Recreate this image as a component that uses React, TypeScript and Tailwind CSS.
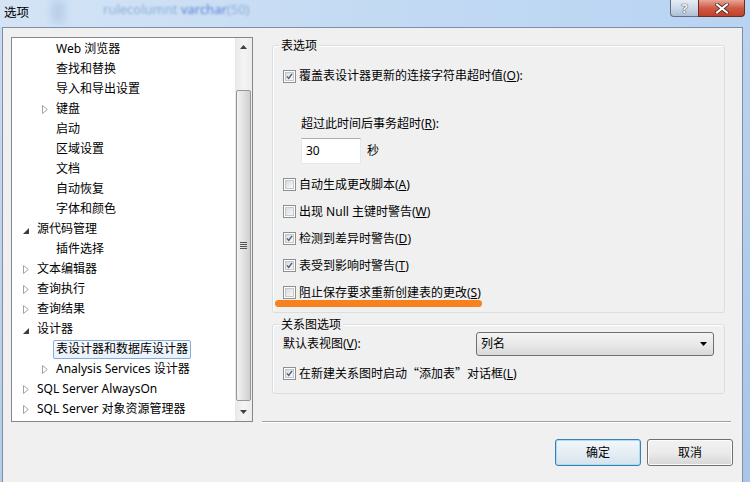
import React from 'react';

type TreeItem = {
    label: string;
    level: 1 | 2;
    arrow?: 'collapsed' | 'expanded';
    selected?: boolean;
};

const treeItems: TreeItem[] = [
    { label: 'Web 浏览器', level: 2 },
    { label: '查找和替换', level: 2 },
    { label: '导入和导出设置', level: 2 },
    { label: '键盘', level: 2, arrow: 'collapsed' },
    { label: '启动', level: 2 },
    { label: '区域设置', level: 2 },
    { label: '文档', level: 2 },
    { label: '自动恢复', level: 2 },
    { label: '字体和颜色', level: 2 },
    { label: '源代码管理', level: 1, arrow: 'expanded' },
    { label: '插件选择', level: 2 },
    { label: '文本编辑器', level: 1, arrow: 'collapsed' },
    { label: '查询执行', level: 1, arrow: 'collapsed' },
    { label: '查询结果', level: 1, arrow: 'collapsed' },
    { label: '设计器', level: 1, arrow: 'expanded' },
    { label: '表设计器和数据库设计器', level: 2, selected: true },
    { label: 'Analysis Services 设计器', level: 2, arrow: 'collapsed' },
    { label: 'SQL Server AlwaysOn', level: 1, arrow: 'collapsed' },
    { label: 'SQL Server 对象资源管理器', level: 1, arrow: 'collapsed' },
];

const TreeArrow = ({ kind }: { kind?: 'collapsed' | 'expanded' }) => {
    if (kind === 'collapsed') {
        return (
            <svg width="6" height="9" viewBox="0 0 6 9">
                <path d="M0.5 0.5 L5.3 4.5 L0.5 8.5 Z" fill="none" stroke="#a3a3a3" strokeWidth="1" />
            </svg>
        );
    }
    if (kind === 'expanded') {
        return (
            <svg width="6" height="6" viewBox="0 0 6 6" className="mt-[3px]">
                <path d="M6 0 L6 6 L0 6 Z" fill="#3c3c3c" />
            </svg>
        );
    }
    return null;
};

const CheckBox = ({ checked }: { checked?: boolean }) => (
    <span className="w-[13px] h-[13px] border border-[#8e8f8f] bg-white p-[1px] flex shrink-0">
        <span className="w-full h-full border border-[#c4c7cb] bg-gradient-to-br from-[#d9dbde] to-[#f8f8f8] flex items-center justify-center">
            {checked && (
                <svg width="9" height="9" viewBox="0 0 9 9">
                    <path d="M1.2 4.3 L3.5 6.9 L7.8 1.2" fill="none" stroke="#4a5a7c" strokeWidth="1.7" />
                </svg>
            )}
        </span>
    </span>
);

const CheckRow = ({ checked, children, className = '' }: { checked?: boolean; children: React.ReactNode; className?: string }) => (
    <div className={`flex items-center gap-[3px] pl-[10px] ${className}`}>
        <CheckBox checked={checked} />
        <span className="leading-[16px]">{children}</span>
    </div>
);

const GroupBox = ({ title, children, className = '' }: { title: string; children: React.ReactNode; className?: string }) => (
    <div className={`border border-[#d5dfe5] rounded-[3px] shadow-[inset_1px_1px_0_#ffffff] ${className}`}>
        <div className="-mt-[8px] ml-[6px] px-[2px] w-fit bg-[#f0f0f0] leading-[16px]">{title}</div>
        {children}
    </div>
);

const App: React.FC = () => {
    return (
        <div className="w-[750px] h-[482px] overflow-hidden flex flex-col bg-[#b9d1ea] text-[12px] text-black font-['Noto_Sans','Noto_Sans_CJK_SC',sans-serif]">
            {/* Title bar */}
            <div className="h-[27px] shrink-0 flex items-start bg-gradient-to-r from-[#d4e4f5] via-[#c3daf3] to-[#b8d4f3]">
                <span className="pl-[4px] pt-[5px] leading-[16px] text-[12.5px]">选项</span>
                <span className="ml-[22px] mt-[1px] w-[14px] h-[22px] bg-[#a9c3e2] blur-[4px] opacity-60" />
                <span className="ml-[38px] pt-[2px] leading-[14px] text-[13px] blur-[1.3px] text-[#8fb0d8]">
                    rulecolumnt <span className="text-[#5f84d4]">varchar</span>(50)
                </span>
                <div className="ml-auto mr-[5px] flex">
                    <div className="w-[28px] h-[17px] border border-r-0 border-t-0 border-[#5f6f86] rounded-bl-[4px] bg-gradient-to-b from-[#e5edf6] via-[#cdd9e7] to-[#aebfd4] flex items-center justify-center">
                        <span className="text-[13px] leading-[14px] font-bold text-[#f4f6f9] [text-shadow:0_0_1px_#2f3a4a,0_0_1px_#2f3a4a]">?</span>
                    </div>
                    <div className="w-[47px] h-[17px] border border-t-0 border-[#6b2d24] rounded-br-[4px] bg-gradient-to-b from-[#e6a597] via-[#cf5a44] to-[#c0412b] flex items-center justify-center">
                        <svg width="14" height="11" viewBox="0 0 14 11">
                            <path d="M2 1.5 L12 9.5 M12 1.5 L2 9.5" stroke="#4a2a26" strokeWidth="3.6" strokeLinecap="square" />
                            <path d="M2 1.5 L12 9.5 M12 1.5 L2 9.5" stroke="#ffffff" strokeWidth="2" strokeLinecap="square" />
                        </svg>
                    </div>
                </div>
            </div>

            <div className="flex-1 flex">
                <div className="w-[2px] bg-gradient-to-b from-[#c7dbf1] to-[#b6cde8]" />

                {/* Client area */}
                <div className="w-[741px] bg-[#f0f0f0] border-l border-t border-r border-[#7f8ea3] flex items-start">
                    {/* Left tree */}
                    <div className="pl-[8px] pt-[9px]">
                        <div className="w-[242px] h-[385px] border border-[#828790] bg-white flex">
                            <div className="flex-1 flex flex-col pt-[1px]">
                                {treeItems.map((item) => (
                                    <div
                                        key={item.label}
                                        className={`h-[20px] flex items-center ${item.level === 1 ? 'pl-[11px]' : 'pl-[30px]'}`}
                                    >
                                        <span className="w-[14px] h-[20px] flex items-center">
                                            <TreeArrow kind={item.arrow} />
                                        </span>
                                        {item.selected ? (
                                            <span className="-ml-[3px] h-[19px] px-[2px] flex items-center border border-[#84acdd] rounded-[2px] bg-gradient-to-b from-[#f8fbfe] to-[#e8f1fc]">
                                                {item.label}
                                            </span>
                                        ) : (
                                            <span className="leading-[16px]">{item.label}</span>
                                        )}
                                    </div>
                                ))}
                            </div>

                            {/* Scrollbar */}
                            <div className="w-[17px] flex flex-col bg-gradient-to-r from-[#e8e8e8] via-[#f4f4f4] to-[#ededed]">
                                <div className="h-[17px] flex items-center justify-center">
                                    <svg width="7" height="4" viewBox="0 0 7 4">
                                        <path d="M0 4 L3.5 0 L7 4 Z" fill="#404040" />
                                    </svg>
                                </div>
                                <div className="h-[35px]" />
                                <div className="h-[311px] mx-[1px] border border-[#979797] rounded-[2px] bg-gradient-to-r from-[#f2f2f2] via-[#e2e2e2] to-[#cfcfcf] flex flex-col items-center justify-center gap-[1px]">
                                    <span className="w-[7px] h-[1px] bg-[#555555]" />
                                    <span className="w-[7px] h-[1px] bg-[#555555]" />
                                    <span className="w-[7px] h-[1px] bg-[#555555]" />
                                    <span className="w-[7px] h-[1px] bg-[#555555]" />
                                </div>
                                <div className="h-[2px]" />
                                <div className="h-[17px] flex items-center justify-center">
                                    <svg width="7" height="4" viewBox="0 0 7 4">
                                        <path d="M0 0 L7 0 L3.5 4 Z" fill="#404040" />
                                    </svg>
                                </div>
                            </div>
                        </div>
                    </div>

                    {/* Right panel */}
                    <div className="flex flex-col">
                        <div className="relative ml-[19px] mt-[17px] w-[453px]">
                            <GroupBox title="表选项" className="pb-[6px]">
                                <CheckRow checked className="mt-[14px]">
                                    覆盖表设计器更新的连接字符串超时值(<u>O</u>):
                                </CheckRow>
                                <div className="mt-[32px] pl-[28px] leading-[16px]">
                                    超过此时间后事务超时(<u>R</u>):
                                </div>
                                <div className="mt-[6px] pl-[28px] flex items-center gap-[6px]">
                                    <div className="w-[60px] h-[26px] bg-white border border-[#e3e9ef] border-t-[#abadb3] flex items-center pl-[4px]">
                                        30
                                    </div>
                                    <span>秒</span>
                                </div>
                                <div className="mt-[7px] flex flex-col">
                                    <CheckRow className="h-[27px]">
                                        自动生成更改脚本(<u>A</u>)
                                    </CheckRow>
                                    <CheckRow className="h-[27px]">
                                        出现 Null 主键时警告(<u>W</u>)
                                    </CheckRow>
                                    <CheckRow checked className="h-[27px]">
                                        检测到差异时警告(<u>D</u>)
                                    </CheckRow>
                                    <CheckRow checked className="h-[27px]">
                                        表受到影响时警告(<u>T</u>)
                                    </CheckRow>
                                    <CheckRow className="h-[27px]">
                                        阻止保存要求重新创建表的更改(<u>S</u>)
                                    </CheckRow>
                                </div>
                            </GroupBox>

                            {/* orange annotation stroke */}
                            <div className="absolute left-[3px] top-[255px] w-[207px] h-[7px] rounded-full bg-[#f5821f]" />

                            <GroupBox title="关系图选项" className="mt-[11px] pb-[11px]">
                                <div className="-mt-[1px] h-[24px] pl-[10px] pr-[10px] flex items-center justify-between">
                                    <span>默认表视图(<u>V</u>):</span>
                                    <div className="w-[238px] h-[24px] border border-[#707070] rounded-[3px] bg-gradient-to-b from-[#f3f3f3] via-[#e9e9e9] to-[#d9d9d9] flex items-center pl-[4px] pr-[6px]">
                                        <span className="flex-1">列名</span>
                                        <svg width="7" height="4" viewBox="0 0 7 4">
                                            <path d="M0 0 L7 0 L3.5 4 Z" fill="#000000" />
                                        </svg>
                                    </div>
                                </div>
                                <CheckRow checked className="mt-[9px]">
                                    在新建关系图时启动<span className="font-['Noto_Sans_CJK_SC',sans-serif]">“</span>添加表<span className="font-['Noto_Sans_CJK_SC',sans-serif]">”</span>对话框(<u>L</u>)
                                </CheckRow>
                            </GroupBox>
                        </div>

                        <div className="ml-[9px] mt-[27px] w-[469px] h-[1px] bg-[#a0a0a0] shadow-[0_1px_0_#ffffff]" />

                        <div className="mt-[17px] ml-[302px] flex gap-[6px]">
                            <button className="w-[86px] h-[27px] border border-[#3c7fb1] rounded-[3px] bg-gradient-to-b from-[#f1f6f9] via-[#e6eef4] to-[#d5e2ec] shadow-[inset_0_0_0_1px_#a9dcf6] flex items-center justify-center">
                                确定
                            </button>
                            <button className="w-[86px] h-[27px] border border-[#707070] rounded-[3px] bg-gradient-to-b from-[#f2f2f2] via-[#ebebeb] to-[#d6d6d6] shadow-[inset_0_0_0_1px_#fbfbfb] flex items-center justify-center">
                                取消
                            </button>
                        </div>
                    </div>
                </div>

                <div className="flex-1 bg-gradient-to-b from-[#bad3ee] to-[#a9c6e6]" />
            </div>
        </div>
    );
};

export default App;
